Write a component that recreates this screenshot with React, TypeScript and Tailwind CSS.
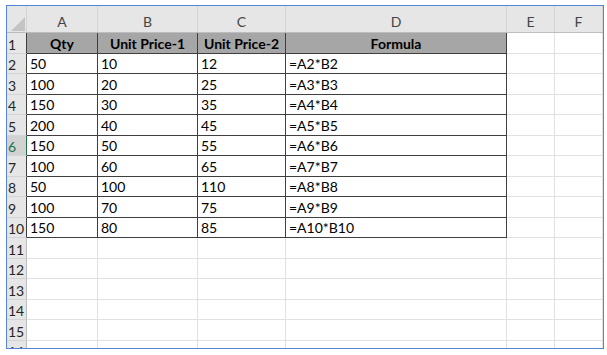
import React from "react";

const cols = [
  { key: "A", w: "w-[71px]" },
  { key: "B", w: "w-[100px]" },
  { key: "C", w: "w-[88px]" },
  { key: "D", w: "w-[221px]" },
  { key: "E", w: "w-[48px]" },
  { key: "F", w: "w-[48px]" },
];

const data = [
  ["50", "10", "12", "=A2*B2"],
  ["100", "20", "25", "=A3*B3"],
  ["150", "30", "35", "=A4*B4"],
  ["200", "40", "45", "=A5*B5"],
  ["150", "50", "55", "=A6*B6"],
  ["100", "60", "65", "=A7*B7"],
  ["50", "100", "110", "=A8*B8"],
  ["100", "70", "75", "=A9*B9"],
  ["150", "80", "85", "=A10*B10"],
];

const headers = ["Qty", "Unit Price-1", "Unit Price-2", "Formula"];

function RowHeader({ n, inTable }: { n: number; inTable: boolean }) {
  const active = n === 6;
  return (
    <div
      className={`w-[20px] shrink-0 flex items-end pl-[1px] pb-[1px] border-b border-b-[#d4d4d4] border-r ${
        active
          ? "bg-[#d2d2d2] text-[#217346] border-r-[#217346]"
          : inTable
          ? "bg-[#e6e6e6] text-[#262626] border-r-[#3f3f3f]"
          : "bg-[#e6e6e6] text-[#262626] border-r-[#bdbdbd]"
      }`}
    >
      {n}
    </div>
  );
}

function App() {
  const rows = Array.from({ length: 16 }, (_, i) => i + 1);

  return (
    <div
      className="w-[607px] h-[355px] bg-white pt-[5px] pl-[6px] overflow-hidden"
      style={{ fontFamily: "Lato, 'Liberation Sans', sans-serif" }}
    >
      <div className="w-[598px] h-[344px] border border-[#5585d6] overflow-hidden bg-white text-[14px] leading-none text-black">
        {/* column letters */}
        <div className="flex h-[27px] bg-[#e6e6e6] border-b border-[#bdbdbd]">
          <div className="w-[20px] shrink-0 border-r border-[#d4d4d4] flex items-end justify-end pb-[1px] pr-[1px]">
            <svg width="14" height="14" viewBox="0 0 14 14">
              <polygon points="14,0 14,14 0,14" fill="#c4c4c4" />
            </svg>
          </div>
          {cols.map((c) => (
            <div
              key={c.key}
              className={`${c.w} shrink-0 border-r border-[#d4d4d4] flex items-end justify-center pb-[3px] text-[#444444]`}
            >
              {c.key}
            </div>
          ))}
        </div>

        {rows.map((n) => {
          const inTable = n <= 10;
          return (
            <div key={n} className="flex h-[20.5px]">
              <RowHeader n={n} inTable={inTable} />
              {cols.map((c, ci) => {
                const isData = inTable && ci < 4;
                let text = "";
                if (n === 1 && ci < 4) text = headers[ci];
                else if (isData) text = data[n - 2][ci];
                return (
                  <div
                    key={c.key}
                    className={`${c.w} shrink-0 border-r border-b flex items-end pb-[2px] ${
                      isData ? "border-[#3f3f3f]" : "border-[#e1e1e1]"
                    } ${
                      n === 1 && ci < 4
                        ? "bg-[#a6a6a6] font-bold justify-center"
                        : "pl-[3px]"
                    }`}
                  >
                    {text}
                  </div>
                );
              })}
            </div>
          );
        })}
      </div>
    </div>
  );
}

export default App;
